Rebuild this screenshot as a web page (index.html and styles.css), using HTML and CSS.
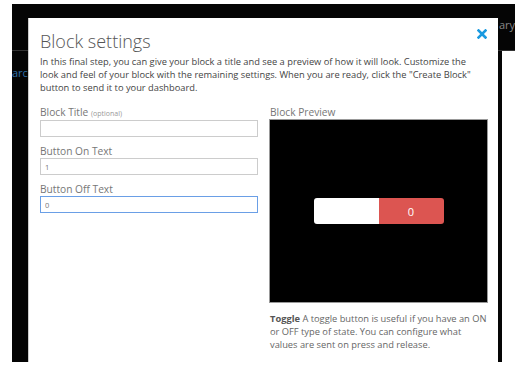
FILE: index.html
```html
<!DOCTYPE html>
<html lang="en">
<head>
    <meta charset="UTF-8">
    <title>Block settings</title>
    <link rel="stylesheet" href="styles.css">
</head>
<body>
    <div class="screen">
        <div class="app-bar">
            <span class="app-bar-right">ary</span>
        </div>
        <div class="app-body">
            <a class="app-link" href="#">arc</a>
        </div>

        <!-- Fenêtre modale des réglages du bloc -->
        <div class="modal">
            <div class="modal-head">
                <h1>Block settings</h1>
                <svg class="close" width="10" height="10" viewBox="0 0 10 10">
                    <path d="M1.5 1.5 L8.5 8.5 M8.5 1.5 L1.5 8.5" stroke="#1a9ae0" stroke-width="2.6" stroke-linecap="square"/>
                </svg>
            </div>
            <p class="intro">In this final step, you can give your block a title and see a preview of how it will look. Customize the look and feel of your block with the remaining settings. When you are ready, click the "Create Block" button to send it to your dashboard.</p>

            <div class="columns">
                <div class="settings">
                    <label>Block Title <small>(optional)</small></label>
                    <input type="text" value="">
                    <label>Button On Text</label>
                    <input type="text" value="1">
                    <label>Button Off Text</label>
                    <input type="text" class="focused" value="0">
                </div>
                <div class="preview">
                    <label>Block Preview</label>
                    <div class="preview-box">
                        <div class="toggle">
                            <span class="toggle-on"></span>
                            <span class="toggle-off">0</span>
                        </div>
                    </div>
                    <p class="help"><b>Toggle</b> A toggle button is useful if you have an ON or OFF type of state. You can configure what values are sent on press and release.</p>
                </div>
            </div>
        </div>
    </div>
</body>
</html>
```
FILE: styles.css
```css
/* Styles généraux */
body, html {
    margin: 0;
    padding: 0;
    background: #fff;
    font-family: 'Open Sans', sans-serif;
    color: #444;
}

/* Fond de l'application derrière la modale */
.screen {
    position: relative;
    margin: 4px 0 0 12px;
    height: 358px;
    overflow: hidden;
}

.app-bar {
    height: 46px;
    background: #050505;
    border-bottom: 1px solid #333;
    position: relative;
}

.app-bar-right {
    position: absolute;
    right: 0;
    top: 13px;
    font-size: 11px;
    color: #888;
}

.app-body {
    width: 490px;
    height: 311px;
    background: #050505;
    padding-top: 14px;
}

.app-link {
    display: block;
    font-size: 11px;
    color: #2f6fa8;
    text-decoration: none;
}

/* Modale */
.modal {
    position: absolute;
    top: 14px;
    left: 16px;
    width: 448px;
    height: 360px;
    background: #fff;
    border-left: 1px solid #ccc;
    padding: 0 10px 0 11px;
}

.modal-head {
    display: flex;
    justify-content: space-between;
    align-items: flex-start;
}

.modal-head h1 {
    margin: 12px 0 0 0;
    font-size: 18px;
    font-weight: 300;
    color: #555;
    line-height: 22px;
}

.close {
    margin: 11px 1px 0 0;
}

.intro {
    margin: 3px 0 0 0;
    width: 436px;
    font-size: 9.3px;
    line-height: 13px;
    color: #444;
}

.columns {
    display: grid;
    grid-template-columns: 218px 219px;
    column-gap: 11px;
    margin-top: 12px;
}

label {
    display: block;
    font-size: 10.2px;
    line-height: 13px;
    color: #777;
}

label small {
    font-size: 7px;
    color: #999;
}

.settings input {
    display: block;
    box-sizing: border-box;
    width: 218px;
    height: 17px;
    margin: 0 0 8px 0;
    padding: 0 4px;
    border: 1px solid #ccc;
    font-family: inherit;
    font-size: 7.5px;
    color: #777;
    outline: none;
}

.settings input.focused {
    border-color: #6a9fe6;
}

/* Aperçu du bloc */
.preview label {
    margin-left: 1px;
}

.preview-box {
    box-sizing: border-box;
    height: 184px;
    background: #000;
    border: 1px solid #999;
    display: flex;
    justify-content: center;
    align-items: center;
}

.toggle {
    display: flex;
    width: 130px;
    height: 26px;
    border-radius: 3px;
    overflow: hidden;
}

.toggle-on {
    flex: 1;
    background: #fff;
}

.toggle-off {
    flex: 1;
    background: #dc5551;
    color: #fff;
    font-size: 11px;
    display: flex;
    align-items: center;
    justify-content: center;
}

.help {
    margin: 9px 0 0 1px;
    font-size: 9.3px;
    line-height: 13px;
    color: #666;
}

.help b {
    color: #555;
}
```
